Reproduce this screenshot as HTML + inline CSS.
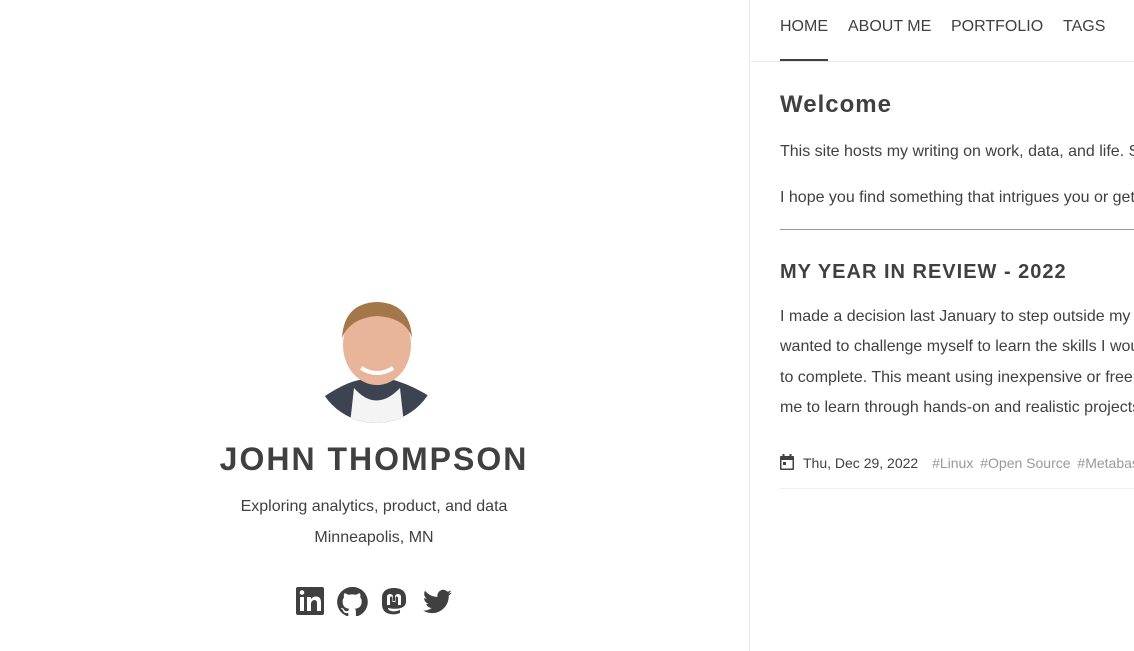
<!DOCTYPE html>
<html><head><meta charset="utf-8"><style>
*{margin:0;padding:0;box-sizing:border-box}
body{width:1134px;height:651px;overflow:hidden;background:#fff;font-family:"Liberation Sans",sans-serif;color:#404040;position:relative}
.left{position:absolute;left:0;top:0;width:750px;height:651px;border-right:1px solid #e8e8e8}
.right{position:absolute;left:751px;top:0;width:383px;height:651px;overflow:hidden;white-space:nowrap}
.abs{position:absolute}
.name{left:0;width:748px;text-align:center;top:441px;font-size:32px;font-weight:bold;letter-spacing:2px}
.sub{left:0;width:748px;text-align:center;font-size:16px}
nav{position:absolute;left:0;top:0;width:383px;height:62px;border-bottom:1px solid #e8e8e8}
nav span{position:absolute;top:18px;font-size:16px}
p{position:absolute;left:29px;font-size:16px}
</style></head><body>
<div class="left">
<svg class="abs" style="left:314px;top:298px" width="124" height="126" viewBox="0 0 124 126">
<defs><clipPath id="c"><circle cx="62" cy="63" r="62"/></clipPath></defs>
<g clip-path="url(#c)">
<rect width="124" height="126" fill="#fff"/>
<path d="M0 126 L8 100 Q30 85 45 82 L80 82 Q100 88 118 100 L124 126Z" fill="#3d4350"/>
<path d="M40 90 Q62 115 86 90 L90 126 L36 126Z" fill="#f4f4f4"/>
<ellipse cx="63" cy="47" rx="34" ry="40" fill="#e8b49a"/>
<path d="M28 40 Q30 5 63 4 Q96 5 98 40 Q92 20 63 18 Q36 20 28 40Z" fill="#a4774a"/>
<path d="M47 70 Q63 80 79 70" stroke="#fff" stroke-width="4" fill="none"/>
</g></svg>
<div class="abs name">JOHN THOMPSON</div>
<div class="abs sub" style="top:498px">Exploring analytics, product, and data</div>
<div class="abs sub" style="top:529px">Minneapolis, MN</div>
<svg class="abs" style="left:295px;top:586px" width="160" height="30" viewBox="0 0 160 30" fill="#404040">
<rect x="1" y="1" width="28" height="28" rx="2"/>
<rect x="5" y="11" width="4" height="14" fill="#fff"/><circle cx="7" cy="6.5" r="2.3" fill="#fff"/>
<path d="M12 11h4v2q2-2.5 5-2.5q5 0 5 6v8.5h-4v-8q0-3-2.5-3t-3.5 3v8h-4z" fill="#fff"/>
<path d="M57 1a15 15 0 0 0-4.7 29.2c.7.1 1-.3 1-.7v-2.6c-4.2.9-5-1.8-5-1.8-.7-1.7-1.7-2.2-1.7-2.2-1.4-.9.1-.9.1-.9 1.5.1 2.3 1.6 2.3 1.6 1.3 2.3 3.5 1.6 4.4 1.2.1-1 .5-1.6 1-2-3.3-.4-6.8-1.700-6.800-7.4 0-1.6.6-3 1.5-4-.1-.4-.7-1.900.2-4 0 0 1.3-.4 4.100 1.500a14 14 0 0 1 7.500 0c2.800-1.900 4.100-1.500 4.100-1.500.8 2.100.3 3.600.2 4 1 1 1.500 2.400 1.500 4 0 5.800-3.500 7-6.800 7.400.5.5 1 1.400 1 2.800v4.100c0 .4.3.9 1 .7A15 15 0 0 0 57 1z"/>
<path d="M99 2c-7 0-12 3-12 10v6c0 6 3 9 8 10q6 1 10-1v-3q-5 2-9 1-3-1-3-3 10 2 15-1c3-2 3-4 3-7v-2c0-7-5-10-12-10z"/>
<path d="M92 19v-8q0-3 3-3t3 3v4h2v-4q0-3 3-3t3 3v8h-3v-7q0-1.5-1.2-1.5t-1.3 1.5v4h-3v-4q0-1.5-1.3-1.5t-1.2 1.5v7z" fill="#fff"/>
<path d="M157 6.5c-1 .5-2.2.8-3.4 1a6 6 0 0 0 2.6-3.3c-1.2.7-2.4 1.2-3.7 1.4a5.9 5.9 0 0 0-10 5.4A16.7 16.7 0 0 1 130 4.8a5.9 5.9 0 0 0 1.8 7.9c-1 0-1.9-.3-2.7-.7 0 2.9 2 5.3 4.7 5.8-.9.2-1.8.3-2.7.1.8 2.4 3 4.1 5.5 4.1A11.8 11.8 0 0 1 128 24.5a16.7 16.7 0 0 0 25.7-14.9c1.2-.8 2.2-1.8 3.3-3.1z"/>
</svg>
</div>
<div class="right">
<nav>
<span style="left:29px">HOME</span><span style="left:97px">ABOUT ME</span><span style="left:200px">PORTFOLIO</span><span style="left:312px">TAGS</span>
<div class="abs" style="left:29px;top:59px;width:48px;height:2px;background:#404040"></div>
</nav>
<p style="top:91px;font-size:24px;font-weight:bold;letter-spacing:1px">Welcome</p>
<p style="top:143px">This site hosts my writing on work, data, and life. See more</p>
<p style="top:189px">I hope you find something that intrigues you or gets you thinking</p>
<div class="abs" style="left:29px;top:229px;width:360px;height:1px;background:#999"></div>
<p style="top:261px;font-size:20px;font-weight:bold;letter-spacing:1px">MY YEAR IN REVIEW - 2022</p>
<p style="top:308px">I made a decision last January to step outside my comfort zone</p>
<p style="top:338px">wanted to challenge myself to learn the skills I would need</p>
<p style="top:369px">to complete. This meant using inexpensive or free tools to allow</p>
<p style="top:399px">me to learn through hands-on and realistic projects</p>
<svg class="abs" style="left:29px;top:454px" width="14" height="16" viewBox="0 0 14 16" fill="#404040"><rect x="2.5" y="0" width="2" height="3"/><rect x="9.5" y="0" width="2" height="3"/><rect x="0" y="2" width="14" height="14" rx="1"/><rect x="1.5" y="6" width="11" height="8.5" fill="#fff"/><rect x="3" y="8" width="3" height="3"/></svg>
<p style="left:52px;top:455px;font-size:14px">Thu, Dec 29, 2022 <span style="color:#999;margin-left:10px">#Linux</span> <span style="color:#999;margin-left:3px">#Open Source</span> <span style="color:#999;margin-left:3px">#Metabase</span></p>
<div class="abs" style="left:29px;top:488px;width:360px;height:1px;background:#eee"></div>
</div>
</body></html>
